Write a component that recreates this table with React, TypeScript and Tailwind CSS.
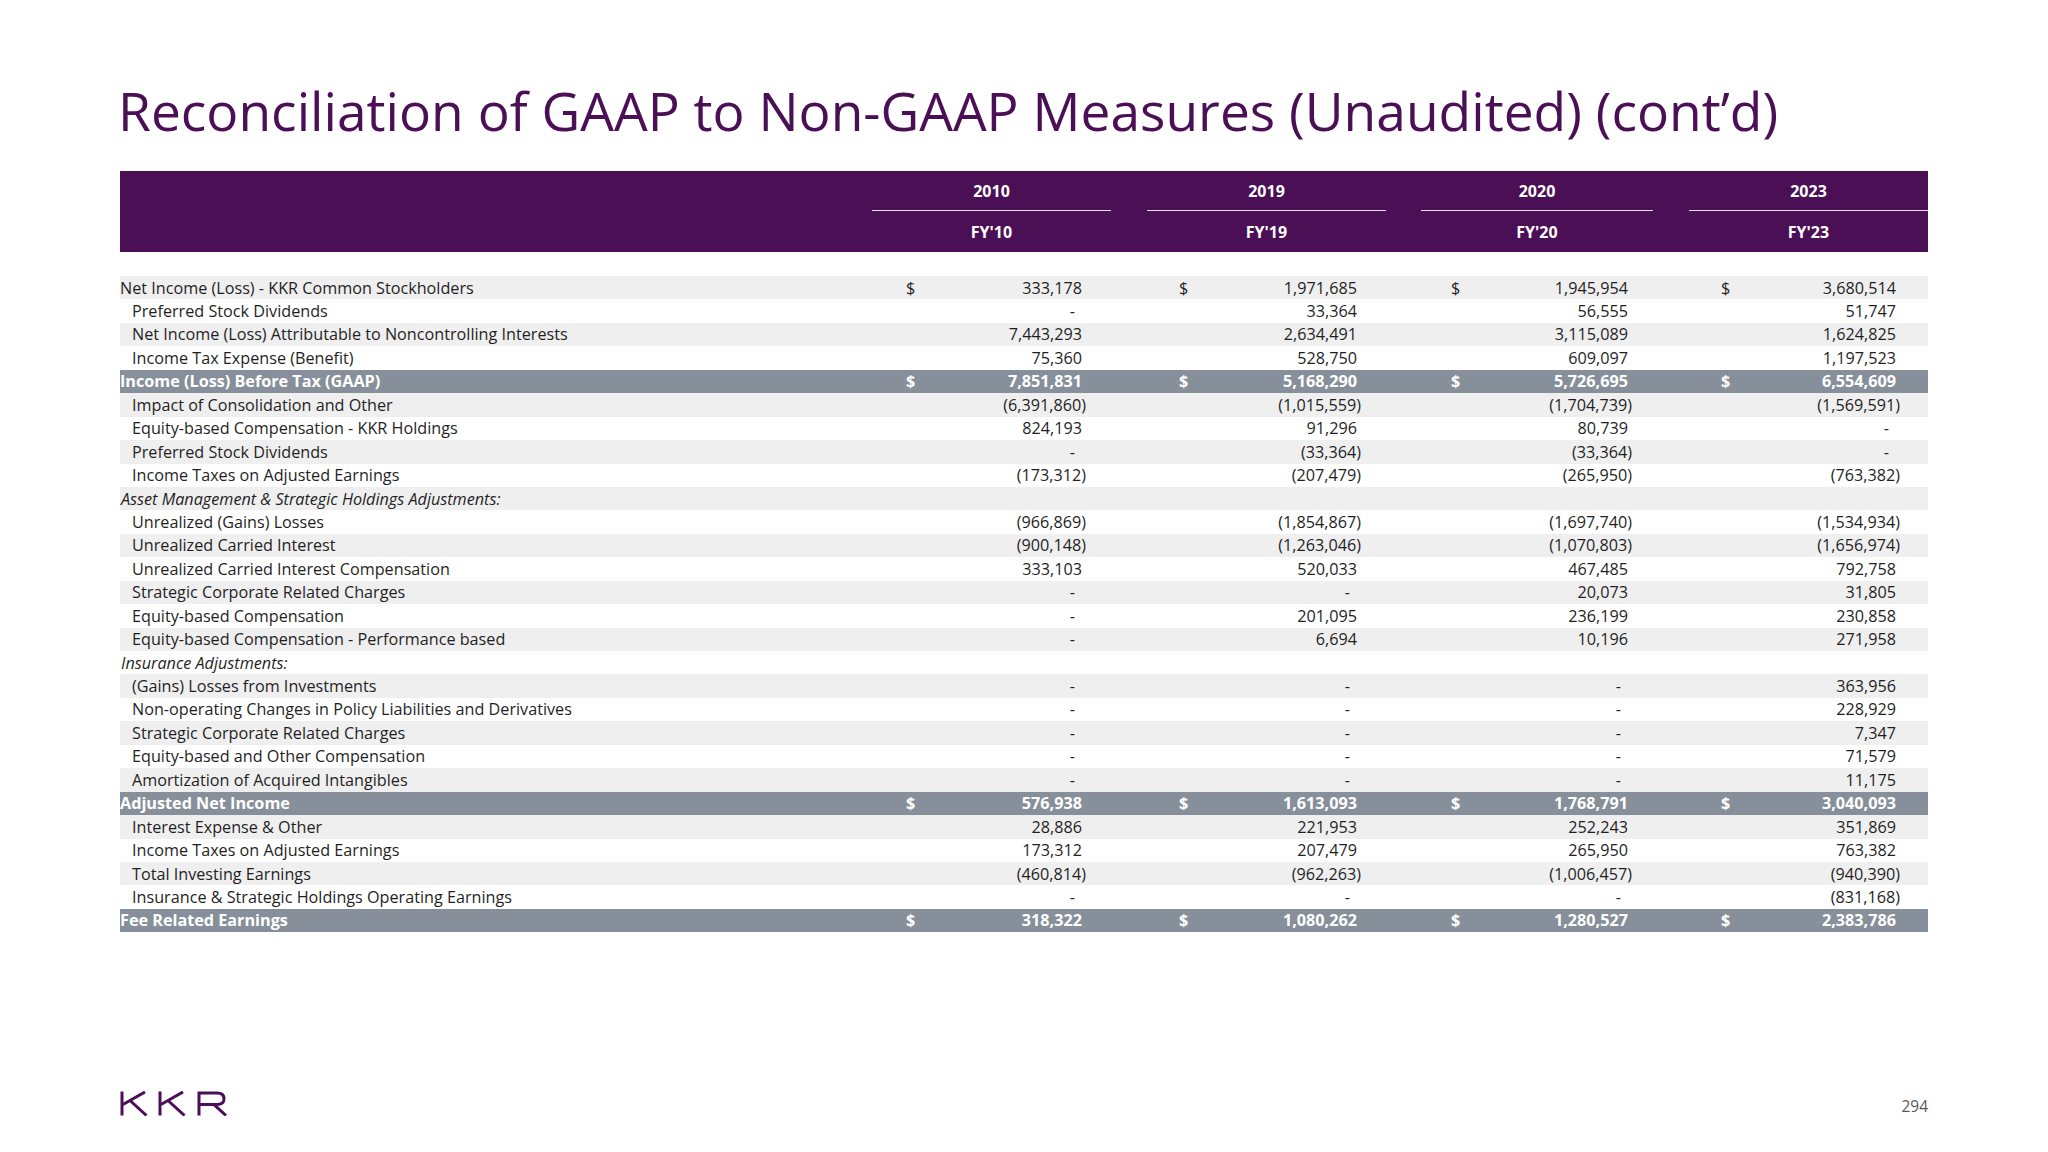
import React from "react";

type Row = {
  label: string;
  kind: "top" | "indent" | "italic" | "total";
  vals?: string[];
  dollar?: boolean;
  shade?: boolean;
};

const rows: Row[] = [
  { label: "Net Income (Loss) - KKR Common Stockholders", kind: "top", dollar: true, shade: true, vals: ["333,178", "1,971,685", "1,945,954", "3,680,514"] },
  { label: "Preferred Stock Dividends", kind: "indent", vals: ["-", "33,364", "56,555", "51,747"] },
  { label: "Net Income (Loss) Attributable to Noncontrolling Interests", kind: "indent", shade: true, vals: ["7,443,293", "2,634,491", "3,115,089", "1,624,825"] },
  { label: "Income Tax Expense (Benefit)", kind: "indent", vals: ["75,360", "528,750", "609,097", "1,197,523"] },
  { label: "Income (Loss) Before Tax (GAAP)", kind: "total", dollar: true, vals: ["7,851,831", "5,168,290", "5,726,695", "6,554,609"] },
  { label: "Impact of Consolidation and Other", kind: "indent", shade: true, vals: ["(6,391,860)", "(1,015,559)", "(1,704,739)", "(1,569,591)"] },
  { label: "Equity-based Compensation - KKR Holdings", kind: "indent", vals: ["824,193", "91,296", "80,739", "-"] },
  { label: "Preferred Stock Dividends", kind: "indent", shade: true, vals: ["-", "(33,364)", "(33,364)", "-"] },
  { label: "Income Taxes on Adjusted Earnings", kind: "indent", vals: ["(173,312)", "(207,479)", "(265,950)", "(763,382)"] },
  { label: "Asset Management & Strategic Holdings Adjustments:", kind: "italic", shade: true },
  { label: "Unrealized (Gains) Losses", kind: "indent", vals: ["(966,869)", "(1,854,867)", "(1,697,740)", "(1,534,934)"] },
  { label: "Unrealized Carried Interest", kind: "indent", shade: true, vals: ["(900,148)", "(1,263,046)", "(1,070,803)", "(1,656,974)"] },
  { label: "Unrealized Carried Interest Compensation", kind: "indent", vals: ["333,103", "520,033", "467,485", "792,758"] },
  { label: "Strategic Corporate Related Charges", kind: "indent", shade: true, vals: ["-", "-", "20,073", "31,805"] },
  { label: "Equity-based Compensation", kind: "indent", vals: ["-", "201,095", "236,199", "230,858"] },
  { label: "Equity-based Compensation - Performance based", kind: "indent", shade: true, vals: ["-", "6,694", "10,196", "271,958"] },
  { label: "Insurance Adjustments:", kind: "italic" },
  { label: "(Gains) Losses from Investments", kind: "indent", shade: true, vals: ["-", "-", "-", "363,956"] },
  { label: "Non-operating Changes in Policy Liabilities and Derivatives", kind: "indent", vals: ["-", "-", "-", "228,929"] },
  { label: "Strategic Corporate Related Charges", kind: "indent", shade: true, vals: ["-", "-", "-", "7,347"] },
  { label: "Equity-based and Other Compensation", kind: "indent", vals: ["-", "-", "-", "71,579"] },
  { label: "Amortization of Acquired Intangibles", kind: "indent", shade: true, vals: ["-", "-", "-", "11,175"] },
  { label: "Adjusted Net Income", kind: "total", dollar: true, vals: ["576,938", "1,613,093", "1,768,791", "3,040,093"] },
  { label: "Interest Expense & Other", kind: "indent", shade: true, vals: ["28,886", "221,953", "252,243", "351,869"] },
  { label: "Income Taxes on Adjusted Earnings", kind: "indent", vals: ["173,312", "207,479", "265,950", "763,382"] },
  { label: "Total Investing Earnings", kind: "indent", shade: true, vals: ["(460,814)", "(962,263)", "(1,006,457)", "(940,390)"] },
  { label: "Insurance & Strategic Holdings Operating Earnings", kind: "indent", vals: ["-", "-", "-", "(831,168)"] },
  { label: "Fee Related Earnings", kind: "total", dollar: true, vals: ["318,322", "1,080,262", "1,280,527", "2,383,786"] },
];

const cellCls = [
  "pl-[34px] pr-[61px]",
  "pl-[32px] pr-[60px]",
  "pl-[30px] pr-[57px]",
  "pl-[32px] pr-[28px]",
];

const lineW = ["w-[239px]", "w-[239px]", "w-[232px]", "w-[239px]"];

const years = [
  ["2010", "FY'10"],
  ["2019", "FY'19"],
  ["2020", "FY'20"],
  ["2023", "FY'23"],
];

const gridCols = "grid grid-cols-[752px_275px_274px_268px_239px]";

function Value({ v }: { v: string }) {
  if (v === "-") return <span className="pr-[11px]">-</span>;
  if (v.startsWith("(")) return <span>{v}</span>;
  return <span className="pr-[4px]">{v}</span>;
}

function KkrLogo() {
  return (
    <svg width="108" height="25" viewBox="0 0 108 25" fill="none" stroke="#4B0F56" strokeWidth="3">
      <path d="M2 0.5 V24.5" />
      <path d="M3 13.5 L25 1" />
      <path d="M10 9.5 L26.5 24.5" />
      <path d="M40 0.5 V24.5" />
      <path d="M41 13.5 L63 1" />
      <path d="M48 9.5 L64.5 24.5" />
      <path d="M79 24.5 V2 H97 C102.5 2 104 4.5 104 7.8 C104 11 102.5 13.6 97 13.6 H79" />
      <path d="M94 13.6 L106 24.5" />
    </svg>
  );
}

export default function App() {
  return (
    <div className="w-[2048px] h-[1152px] bg-white flex flex-col font-['Open_Sans',sans-serif] text-[#1f1f1f]">
      <div className="pl-[118px] pt-[84px] h-[171px]">
        <h1 className="text-[53.3px] leading-none text-[#4B0F56] font-normal">
          Reconciliation of GAAP to Non-GAAP Measures (Unaudited) (cont’d)
        </h1>
      </div>

      <div className="ml-[120px] w-[1808px]">
        <div className={`${gridCols} bg-[#4B0F56] h-[81px] text-white font-bold text-[16px]`}>
          <div />
          {years.map((y, i) => (
            <div key={i} className="flex flex-col">
              <div className={`${lineW[i]} h-[40px] flex items-center justify-center border-b border-[#e8e0ea]`}>{y[0]}</div>
              <div className={`${lineW[i]} h-[41px] pt-[1px] flex items-center justify-center`}>{y[1]}</div>
            </div>
          ))}
        </div>

        <div className="h-[24px]" />

        <div className="text-[16.2px]">
          {rows.map((r, idx) => {
            const isTotal = r.kind === "total";
            const bg = isTotal ? "bg-[#87909a] text-white font-bold" : r.shade ? "bg-[#efefef]" : "bg-white";
            const labelCls =
              r.kind === "indent" ? "pl-[12px]" : r.kind === "italic" ? "pl-[1px] italic" : "pl-0";
            return (
              <div key={idx} className={`${gridCols} h-[23.45px] items-center leading-none ${bg}`}>
                <div className={`${labelCls} whitespace-nowrap`}>{r.label}</div>
                {r.vals
                  ? r.vals.map((v, j) => (
                      <div key={j} className={`flex items-center justify-between whitespace-nowrap ${cellCls[j]}`}>
                        <span>{r.dollar ? "$" : ""}</span>
                        <Value v={v} />
                      </div>
                    ))
                  : [0, 1, 2, 3].map((j) => <div key={j} />)}
              </div>
            );
          })}
        </div>
      </div>

      <div className="mt-auto flex items-end justify-between pl-[120px] pr-[120px] pb-[36px]">
        <KkrLogo />
        <div className="text-[15.5px] text-[#595959] leading-none pb-[2px]">294</div>
      </div>
    </div>
  );
}
